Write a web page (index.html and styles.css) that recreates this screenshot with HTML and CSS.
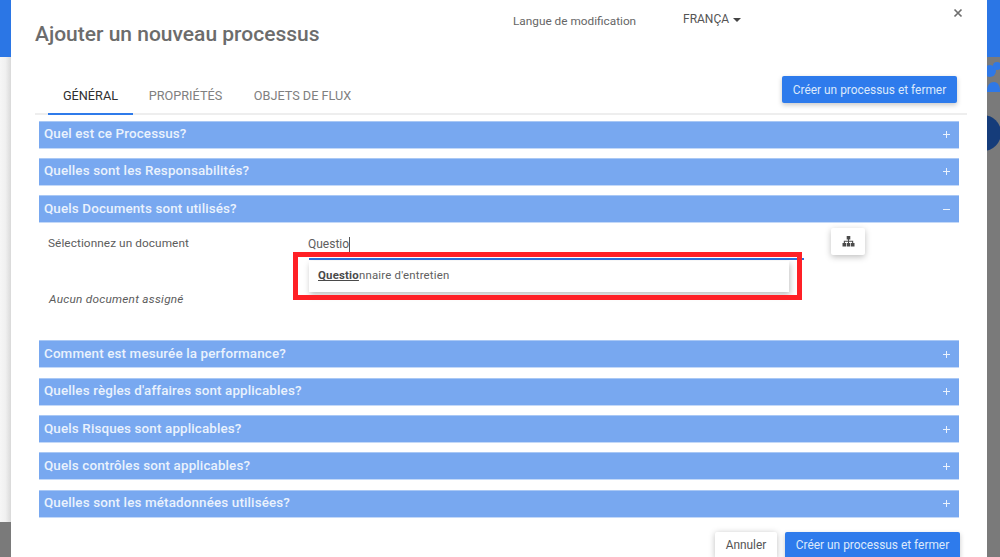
FILE: index.html
```html
<!DOCTYPE html>
<html lang="fr">
<head>
<meta charset="utf-8">
<title>Ajouter un nouveau processus</title>
<link rel="stylesheet" href="styles.css">
</head>
<body>
<div class="backdrop">
  <div class="left-strip"><div class="strip-blue"></div><div class="strip-light"></div></div>
  <div class="right-strip">
    <div class="strip-blue"></div>
    <svg class="bg-art" width="13" height="100" viewBox="0 0 13 100">
      <circle cx="3" cy="14" r="6" fill="#2f78e6"/>
      <circle cx="10" cy="9" r="4" fill="#2f78e6"/>
      <path d="M0 34c0-6 3-9 7-9s6 4 6 9v1H0z" fill="#2f78e6"/>
      <circle cx="-4" cy="76" r="18" fill="#153c7a"/>
    </svg>
  </div>
</div>
<main class="modal">
  <button class="close" aria-label="Fermer">
    <svg width="10" height="10" viewBox="0 0 10 10"><path d="M1.5 1.5l7 7M8.5 1.5l-7 7" stroke="#6f6f6f" stroke-width="1.7" fill="none"/></svg>
  </button>
  <header class="head">
    <h1 class="title">Ajouter un nouveau processus</h1>
    <span class="lang-label">Langue de modification</span>
    <span class="lang-value">FRANÇA<i class="caret"></i></span>
  </header>
  <div class="tabbar">
    <nav class="tabs">
      <a class="tab active">GÉNÉRAL</a>
      <a class="tab">PROPRIÉTÉS</a>
      <a class="tab">OBJETS DE FLUX</a>
    </nav>
    <button class="btn primary top-btn">Créer un processus et fermer</button>
  </div>
  <section class="accordion">
    <div class="bar"><span>Quel est ce Processus?</span><b class="plus"></b></div>
    <div class="bar"><span>Quelles sont les Responsabilités?</span><b class="plus"></b></div>
    <div class="bar"><span>Quels Documents sont utilisés?</span><b class="minus"></b></div>
    <div class="panel">
      <div class="field-row">
        <label class="field-label">Sélectionnez un document</label>
        <div class="input-wrap">
          <div class="input-text">Questio<span class="cursor"></span></div>
          <div class="underline"></div>
          <div class="suggest"><strong>Questio</strong>nnaire d'entretien</div>
          <div class="highlight"></div>
        </div>
        <button class="tree-btn" aria-label="Organigramme">
          <svg width="13" height="11" viewBox="0 0 13 11"><path d="M4.7 0h3.6v3.4H7v1.3h4.2V7h1.3v3.6H8.9V7h1.2V5.8H7V7h1.2v3.6H4.8V7H6V5.8H2.9V7h1.2v3.6H.5V7h1.3V4.7H6V3.4H4.7z" fill="#4a4a4a"/></svg>
        </button>
      </div>
      <em class="empty">Aucun document assigné</em>
    </div>
    <div class="bar"><span>Comment est mesurée la performance?</span><b class="plus"></b></div>
    <div class="bar"><span>Quelles règles d'affaires sont applicables?</span><b class="plus"></b></div>
    <div class="bar"><span>Quels Risques sont applicables?</span><b class="plus"></b></div>
    <div class="bar"><span>Quels contrôles sont applicables?</span><b class="plus"></b></div>
    <div class="bar"><span>Quelles sont les métadonnées utilisées?</span><b class="plus"></b></div>
  </section>
  <footer class="foot">
    <button class="btn cancel">Annuler</button>
    <button class="btn primary">Créer un processus et fermer</button>
  </footer>
</main>
</body>
</html>
```
FILE: styles.css
```css
* { box-sizing: border-box; }
html, body { margin: 0; height: 557px; overflow: hidden; }
body { background: #7a7a7a; font-family: Roboto, sans-serif; position: relative; }

.backdrop { position: absolute; inset: 0; display: flex; justify-content: space-between; }
.left-strip { width: 11px; }
.right-strip { width: 13px; position: relative; }
.strip-blue { height: 57px; background: #2b76e5; }
.strip-light { height: 465px; background: linear-gradient(90deg, #f6f6f6 0%, #f0f0f0 50%, #d9d9d9 100%); }
.bg-art { position: absolute; left: 0; top: 57px; }

.modal {
  position: absolute; left: 11px; top: 0; width: 976px; height: 557px;
  background: #fff; padding: 0 24px;
  display: flex; flex-direction: column;
}
.close { position: absolute; left: 942px; top: 8px; width: 10px; height: 10px; padding: 0; border: 0; background: none; display: flex; }

.head { height: 72px; flex: none; display: flex; align-items: flex-start; }
.title { margin: 22px 0 0; width: 478px; font-size: 21px; line-height: 24px; font-weight: 500; color: #6c6c6c; white-space: nowrap; }
.lang-label { margin-top: 14px; width: 170px; font-size: 11.8px; line-height: 15px; color: #666; white-space: nowrap; }
.lang-value { margin-top: 12px; font-size: 12px; line-height: 15px; color: #555; display: flex; align-items: center; white-space: nowrap; }
.caret { margin-left: 4px; border: 4px solid transparent; border-top: 4px solid #444; border-bottom: 0; }

.tabbar { height: 43px; flex: none; margin-right: -4px; border-bottom: 2px solid #eee; display: flex; justify-content: space-between; }
.tabs { display: flex; margin-left: 13px; height: 43px; }
.tab { width: 85px; font-size: 12.7px; line-height: 47px; text-align: center; color: #808080; white-space: nowrap; margin-right: 15.5px; }
.tab:nth-child(2) { width: 74px; margin-right: 31px; }
.tab:nth-child(3) { width: 98px; }
.tab.active { color: #2f2f2f; border-bottom: 2px solid #2f7bea; }

.btn { font-family: Roboto, sans-serif; font-size: 11.9px; height: 27px; border: 0; border-radius: 2px; padding: 0; white-space: nowrap; }
.primary { background: #2e7bec; color: #dce9fb; box-shadow: 0 2px 5px rgba(0,0,0,.22); }
.top-btn { width: 175px; margin: 4px 10px 0 0; }

.accordion { margin: 5.5px 4px 0 4px; }
.bar {
  height: 28px; margin-bottom: 9.4px; padding: 0 9px 0 5px;
  background: #78a8f0; border-top: 1px solid #a9c8f5; border-bottom: 1px solid #c4d9f8;
  display: flex; align-items: center; justify-content: space-between;
  color: #eaf2fd; font-size: 13.4px; font-weight: 500; letter-spacing: .14px;
}
.bar span { margin-top: -2px; }
.plus, .minus { position: relative; width: 7px; height: 7px; }
.plus::before, .minus::before { content: ""; position: absolute; left: 0; top: 3px; width: 7px; height: 1px; background: #eaf2fd; }
.plus::after { content: ""; position: absolute; left: 3px; top: 0; width: 1px; height: 7px; background: #eaf2fd; }

.panel { height: 117px; margin-top: -9.4px; padding: 5px 0 0 9px; }
.field-row { display: flex; align-items: flex-start; height: 66px; }
.field-label { width: 260px; margin-top: 8px; font-size: 11.8px; line-height: 15px; letter-spacing: .08px; color: #5c5c5c; }
.input-wrap { position: relative; width: 495px; height: 66px; }
.input-text { padding-top: 9px; font-size: 12px; line-height: 15px; color: #5e5e5e; display: flex; }
.cursor { width: 1px; height: 15px; background: #555; }
.underline { position: absolute; left: 1px; top: 30px; width: 495px; height: 2px; background: #2d6fdc; }
.suggest {
  position: absolute; left: 1px; top: 33px; width: 480px; height: 31px; padding-left: 9px;
  background: #fff; font-size: 11.4px; line-height: 28px; letter-spacing: .2px; color: #606060;
  box-shadow: 1px 3px 6px rgba(0,0,0,.25);
}
.suggest strong { font-weight: 700; color: #4a4a4a; text-decoration: underline; }
.highlight { position: absolute; left: -15px; top: 24px; width: 509px; height: 48px; border: 5px solid #ff2026; }
.tree-btn {
  margin: 0 0 0 28px; width: 34px; height: 27px; padding: 0; border: 0; border-radius: 2px; background: #fff;
  box-shadow: 0 2px 6px rgba(0,0,0,.25); display: flex; align-items: center; justify-content: center;
}
.empty { display: block; margin-left: 1px; margin-top: -2px; font-size: 11.8px; line-height: 15px; letter-spacing: .25px; color: #5c5c5c; }

.foot { display: flex; justify-content: flex-end; gap: 8px; margin: 4.6px 3px 0 0; }
.foot .primary { width: 175px; }
.cancel { width: 62px; background: #fff; color: #555; box-shadow: 0 1px 6px rgba(0,0,0,.25); }
```
